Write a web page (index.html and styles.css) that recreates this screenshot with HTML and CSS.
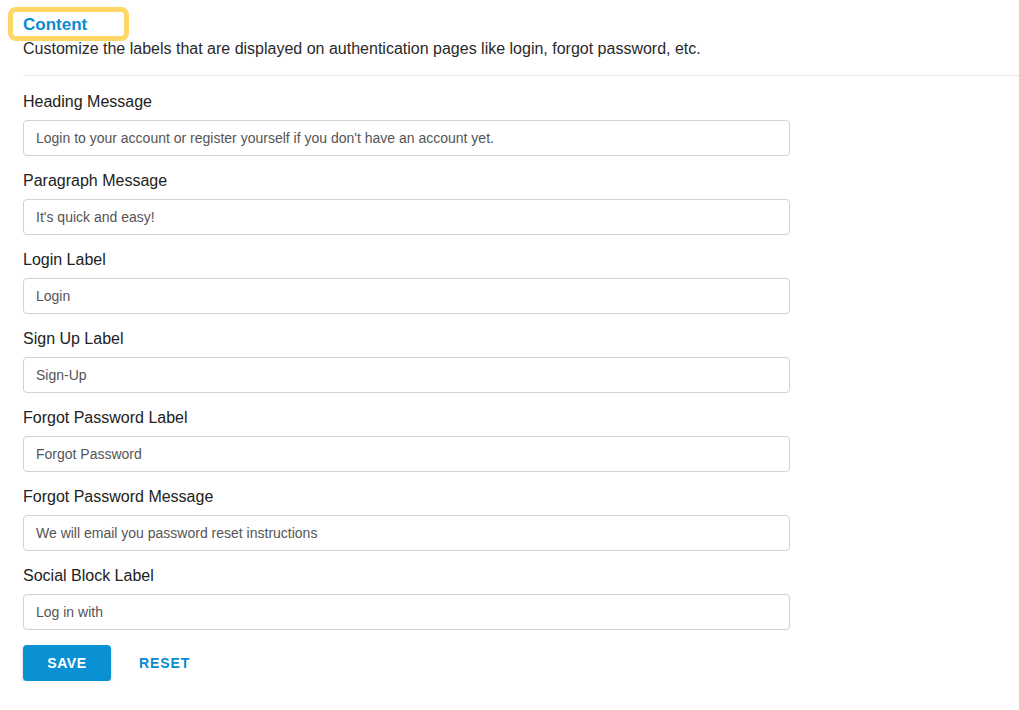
FILE: index.html
```html
<!DOCTYPE html>
<html lang="en">
<head>
<meta charset="utf-8">
<title>Content</title>
<link rel="stylesheet" href="styles.css">
</head>
<body>
<div class="page">
  <h2 class="title">Content</h2>
  <p class="subtitle">Customize the labels that are displayed on authentication pages like login, forgot password, etc.</p>
  <hr class="divider">
  <form class="form">
    <div class="field">
      <label class="label">Heading Message</label>
      <input class="input" type="text" value="Login to your account or register yourself if you don't have an account yet.">
    </div>
    <div class="field">
      <label class="label">Paragraph Message</label>
      <input class="input" type="text" value="It's quick and easy!">
    </div>
    <div class="field">
      <label class="label">Login Label</label>
      <input class="input" type="text" value="Login">
    </div>
    <div class="field">
      <label class="label">Sign Up Label</label>
      <input class="input" type="text" value="Sign-Up">
    </div>
    <div class="field">
      <label class="label">Forgot Password Label</label>
      <input class="input" type="text" value="Forgot Password">
    </div>
    <div class="field">
      <label class="label">Forgot Password Message</label>
      <input class="input" type="text" value="We will email you password reset instructions">
    </div>
    <div class="field">
      <label class="label">Social Block Label</label>
      <input class="input" type="text" value="Log in with">
    </div>
    <div class="actions">
      <button type="button" class="btn btn-primary">Save</button>
      <button type="button" class="btn btn-text">Reset</button>
    </div>
  </form>
</div>
</body>
</html>
```
FILE: styles.css
```css
* { box-sizing: border-box; }
html, body {
  margin: 0;
  padding: 0;
  background: #ffffff;
}
body {
  font-family: "Liberation Sans", Arial, sans-serif;
  color: #222222;
}
.page {
  padding: 12px 0 0 23px;
}
.title {
  display: block;
  width: 111px;
  height: 24px;
  margin: 0 0 0 -10px;
  padding: 1px 0 0 10px;
  font-size: 17px;
  line-height: 23px;
  font-weight: bold;
  color: #0b8bd0;
  outline: 5px solid #fcd666;
  border-radius: 3px;
}
.subtitle {
  margin: 0;
  padding-top: 1px;
  font-size: 16px;
  line-height: 24px;
  color: #2a2a2a;
}
.divider {
  margin: 14px 0 0 0;
  border: 0;
  border-top: 1px solid #e6e6e6;
  height: 0;
}
.form {
  display: flex;
  flex-direction: column;
  padding-top: 15px;
}
.field {
  display: flex;
  flex-direction: column;
  gap: 8px;
  margin-bottom: 14px;
}
.label {
  padding-top: 1px;
  font-size: 16px;
  line-height: 20px;
  color: #222222;
}
.input {
  width: 767px;
  height: 36px;
  padding: 0 12px;
  border: 1px solid #cfd2d6;
  border-radius: 4px;
  font-family: "Liberation Sans", Arial, sans-serif;
  font-size: 14px;
  color: #555555;
  background: #ffffff;
  outline: none;
}
.actions {
  display: flex;
  gap: 12px;
  margin-top: 1px;
}
.btn {
  height: 36px;
  padding: 0 16px;
  border: 0;
  border-radius: 4px;
  font-family: "Liberation Sans", Arial, sans-serif;
  font-size: 14px;
  font-weight: bold;
  letter-spacing: 0.6px;
  text-transform: uppercase;
  cursor: pointer;
}
.btn-primary {
  width: 88px;
  background: #0a91d3;
  color: #ffffff;
  box-shadow: 0 2px 3px rgba(0, 0, 0, 0.25);
}
.btn-text {
  background: transparent;
  color: #0a8bd0;
  letter-spacing: 0.9px;
}
```
